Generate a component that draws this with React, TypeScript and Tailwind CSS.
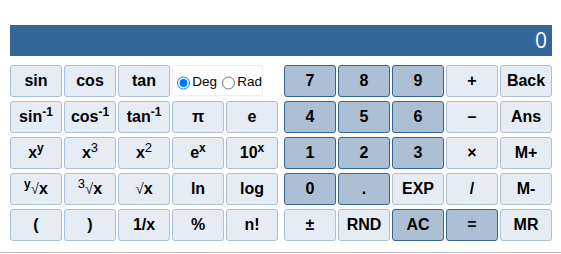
import React from "react";

const light = "bg-[#e6ecf4] border-[#a7bfd9]";
const dark = "bg-[#acbfd5] border-[#336699]";

function Btn({ children, d }: { children: React.ReactNode; d?: boolean }) {
  return (
    <div
      className={`h-[32px] w-[52px] rounded-[3px] border flex items-center justify-center font-bold text-[16px] text-black ${d ? dark : light}`}
    >
      <span className="leading-[18px] whitespace-nowrap">{children}</span>
    </div>
  );
}

const Sup = ({ children, n }: { children: React.ReactNode; n?: boolean }) => (
  <span className={`relative top-[-6px] text-[12px] leading-none ${n ? "font-normal text-[13px]" : ""}`}>{children}</span>
);

const Rt = () => <span className="font-normal text-[15px] text-[#333]">√</span>;

export default function App() {
  return (
    <div className="w-[561px] h-[254px] bg-white pt-[25px] pl-[10px] relative" style={{ fontFamily: '"Liberation Sans", Arial, sans-serif' }}>
      <div className="w-[542px] h-[31px] bg-[#336699] text-white flex items-center justify-end pr-[5px] text-[21px]" style={{ fontFamily: '"Open Sans", sans-serif' }}>
        0
      </div>
      <div className="flex gap-[6px] mt-[9px]">
        <div className="grid grid-cols-[repeat(5,52px)] gap-x-[2px] gap-y-[4px]">
          <Btn>sin</Btn>
          <Btn>cos</Btn>
          <Btn>tan</Btn>
          <div className="col-span-2 w-[91px] h-[31px] rounded-[3px] border border-[#eeeeee] flex items-center pt-[3px] text-[13.5px] text-black">
            <input type="radio" name="u" defaultChecked className="w-[14px] h-[14px] ml-[4px] mr-[2px] mt-[1px]" />
            <span>Deg</span>
            <input type="radio" name="u" className="w-[14px] h-[14px] ml-[5px] mr-[2px] mt-[1px]" />
            <span>Rad</span>
          </div>
          <Btn>sin<Sup>-1</Sup></Btn>
          <Btn>cos<Sup>-1</Sup></Btn>
          <Btn>tan<Sup>-1</Sup></Btn>
          <Btn>π</Btn>
          <Btn>e</Btn>
          <Btn>x<Sup>y</Sup></Btn>
          <Btn>x<Sup n>3</Sup></Btn>
          <Btn>x<Sup n>2</Sup></Btn>
          <Btn>e<Sup>x</Sup></Btn>
          <Btn>10<Sup>x</Sup></Btn>
          <Btn><Sup>y</Sup><Rt />x</Btn>
          <Btn><Sup n>3</Sup><Rt />x</Btn>
          <Btn><Rt />x</Btn>
          <Btn>ln</Btn>
          <Btn>log</Btn>
          <Btn>(</Btn>
          <Btn>)</Btn>
          <Btn>1/x</Btn>
          <Btn>%</Btn>
          <Btn>n!</Btn>
        </div>
        <div className="grid grid-cols-[repeat(5,52px)] gap-x-[2px] gap-y-[4px]">
          <Btn d>7</Btn>
          <Btn d>8</Btn>
          <Btn d>9</Btn>
          <Btn>+</Btn>
          <Btn>Back</Btn>
          <Btn d>4</Btn>
          <Btn d>5</Btn>
          <Btn d>6</Btn>
          <Btn>–</Btn>
          <Btn>Ans</Btn>
          <Btn d>1</Btn>
          <Btn d>2</Btn>
          <Btn d>3</Btn>
          <Btn>×</Btn>
          <Btn>M+</Btn>
          <Btn d>0</Btn>
          <Btn d>.</Btn>
          <Btn>EXP</Btn>
          <Btn>/</Btn>
          <Btn>M-</Btn>
          <Btn>±</Btn>
          <Btn>RND</Btn>
          <Btn d>AC</Btn>
          <Btn d>=</Btn>
          <Btn>MR</Btn>
        </div>
      </div>
      <div className="absolute left-0 right-0 top-[252px] h-[1px] bg-[#bbbbbb]"></div>
    </div>
  );
}
